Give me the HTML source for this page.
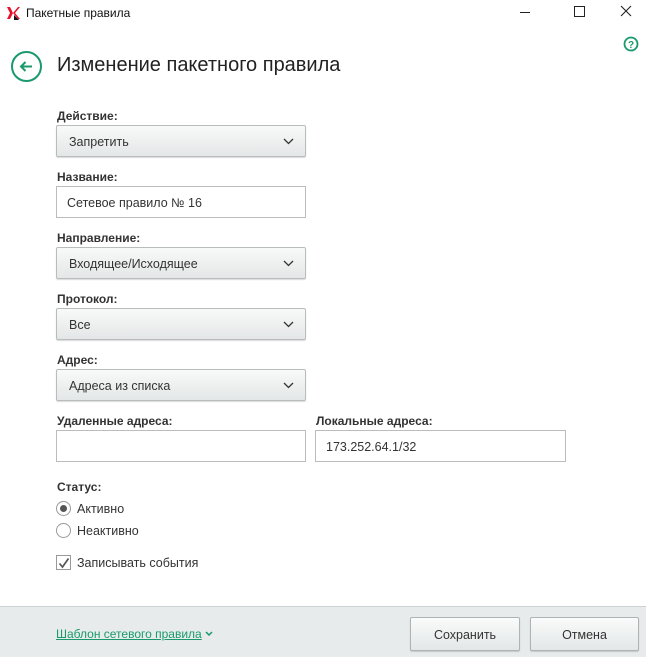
<!DOCTYPE html>
<html><head><meta charset="utf-8"><style>
*{box-sizing:border-box;margin:0;padding:0}
body{width:646px;height:657px;background:#fff;font-family:"Liberation Sans","DejaVu Sans",sans-serif;font-size:12px;color:#222;position:relative;overflow:hidden}
.a{position:absolute}
.lbl{position:absolute;left:57px;font-size:12px;font-weight:bold;color:#333}
.dd{position:absolute;left:56px;width:250px;height:32px;border:1px solid #b8bcbc;border-radius:2px;background:linear-gradient(#f8f9f9,#e4e7e7);box-shadow:0 1px 1px rgba(0,0,0,.15);padding:9px 0 0 12px;font-size:12.5px;color:#333}
.dd svg{position:absolute;right:11px;top:12px}
.in{position:absolute;height:32px;border:1px solid #b9bdbd;background:#fff;padding:9px 0 0 10px;font-size:12.5px;color:#333}
.btn{position:absolute;top:617px;height:34px;border:1px solid #aeb3b3;border-radius:2px;background:linear-gradient(#fafbfb,#e3e7e7);text-align:center;padding-top:10px;font-size:12.5px;color:#333;box-shadow:0 1px 1px rgba(0,0,0,.15)}
</style></head><body>
<svg class="a" style="left:6px;top:6px" width="14" height="14" viewBox="0 0 14 14"><path d="M1 1h3l3 6-3 6H1l3-6z" fill="#e8102a"/><path d="M7 7l5-6h2l-5 6 5 6h-2z" fill="#e8102a"/><path d="M8 9l5 5H8z" fill="#111"/></svg>
<div class="a" style="left:26px;top:6px;font-size:12px;color:#111">Пакетные правила</div>
<div class="a" style="left:520px;top:12px;width:10px;height:1px;background:#222"></div>
<div class="a" style="left:574px;top:6px;width:11px;height:11px;border:1px solid #222"></div>
<svg class="a" style="left:620px;top:5px" width="12" height="12"><path d="M1 1L11 11M11 1L1 11" stroke="#222" stroke-width="1.1"/></svg>
<svg class="a" style="left:623px;top:36px" width="16" height="16"><circle cx="8" cy="8" r="6.5" fill="none" stroke="#1a9a6c" stroke-width="1.8"/><text x="8" y="12" text-anchor="middle" font-size="10" font-weight="bold" fill="#1a9a6c" font-family="Liberation Sans">?</text></svg>
<svg class="a" style="left:10px;top:50px" width="33" height="33"><circle cx="16.5" cy="16.5" r="14.5" fill="none" stroke="#1a9a6c" stroke-width="2"/><path d="M22 16.5H11M15.5 12l-4.5 4.5 4.5 4.5" fill="none" stroke="#1a9a6c" stroke-width="2"/></svg>
<div class="a" style="left:57px;top:54px;font-size:20px;color:#222">Изменение пакетного правила</div>
<div class="lbl" style="top:109px">Действие:</div>
<div class="dd" style="top:125px">Запретить<svg width="11" height="7"><path d="M1 1l4.5 4.5L10 1" fill="none" stroke="#333" stroke-width="1.3"/></svg></div>
<div class="lbl" style="top:170px">Название:</div>
<div class="in" style="left:56px;top:186px;width:250px">Сетевое правило № 16</div>
<div class="lbl" style="top:231px">Направление:</div>
<div class="dd" style="top:247px">Входящее/Исходящее<svg width="11" height="7"><path d="M1 1l4.5 4.5L10 1" fill="none" stroke="#333" stroke-width="1.3"/></svg></div>
<div class="lbl" style="top:292px">Протокол:</div>
<div class="dd" style="top:308px">Все<svg width="11" height="7"><path d="M1 1l4.5 4.5L10 1" fill="none" stroke="#333" stroke-width="1.3"/></svg></div>
<div class="lbl" style="top:353px">Адрес:</div>
<div class="dd" style="top:369px">Адреса из списка<svg width="11" height="7"><path d="M1 1l4.5 4.5L10 1" fill="none" stroke="#333" stroke-width="1.3"/></svg></div>
<div class="lbl" style="top:414px">Удаленные адреса:</div>
<div class="lbl" style="top:414px;left:316px">Локальные адреса:</div>
<div class="in" style="left:56px;top:430px;width:250px"></div>
<div class="in" style="left:315px;top:430px;width:251px">173.252.64.1/32</div>
<div class="lbl" style="top:480px">Статус:</div>
<div class="a" style="left:56px;top:501px;width:15px;height:15px;border:1px solid #999;border-radius:50%;background:#fff"><div class="a" style="left:3px;top:3px;width:7px;height:7px;border-radius:50%;background:#555"></div></div>
<div class="a" style="left:77px;top:502px;font-size:12.5px;color:#333">Активно</div>
<div class="a" style="left:56px;top:523px;width:15px;height:15px;border:1px solid #999;border-radius:50%;background:#fff"></div>
<div class="a" style="left:77px;top:524px;font-size:12.5px;color:#333">Неактивно</div>
<div class="a" style="left:56px;top:555px;width:15px;height:15px;border:1px solid #999;background:#fff"><svg class="a" style="left:1px;top:1px" width="12" height="12"><path d="M1.5 6.5l3 3.5 6-8.5" fill="none" stroke="#555" stroke-width="1.7"/></svg></div>
<div class="a" style="left:77px;top:556px;font-size:12.5px;color:#333">Записывать события</div>
<div class="a" style="left:0;top:606px;width:646px;height:51px;background:#e8ebeb;border-top:1px solid #cdd1d1"></div>
<div class="a" style="left:56px;top:627px;font-size:12px;color:#1a9a6c;text-decoration:underline;white-space:nowrap">Шаблон сетевого правила</div>
<svg class="a" style="left:205px;top:631px" width="8" height="6"><path d="M1 1l3 3 3-3" fill="none" stroke="#1a9a6c" stroke-width="1.5"/></svg>
<div class="btn" style="left:410px;width:110px">Сохранить</div>
<div class="btn" style="left:530px;width:109px">Отмена</div>
</body></html>
